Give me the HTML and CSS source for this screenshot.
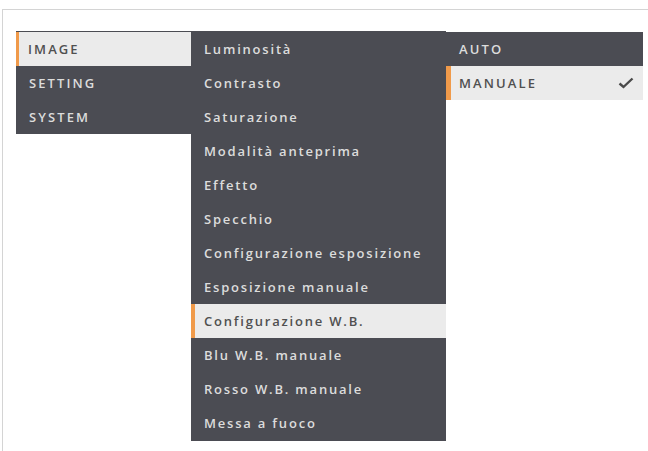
FILE: index.html
```html
<!DOCTYPE html>
<html>
<head>
<meta charset="utf-8">
<link rel="stylesheet" href="styles.css">
</head>
<body>
<div class="frame">
  <div class="menu">
    <ul class="col col1">
      <li class="item sel caps">IMAGE</li>
      <li class="item caps">SETTING</li>
      <li class="item caps">SYSTEM</li>
    </ul>
    <ul class="col col2">
      <li class="item">Luminosità</li>
      <li class="item">Contrasto</li>
      <li class="item">Saturazione</li>
      <li class="item">Modalità anteprima</li>
      <li class="item">Effetto</li>
      <li class="item">Specchio</li>
      <li class="item">Configurazione esposizione</li>
      <li class="item">Esposizione manuale</li>
      <li class="item sel">Configurazione W.B.</li>
      <li class="item">Blu W.B. manuale</li>
      <li class="item">Rosso W.B. manuale</li>
      <li class="item">Messa a fuoco</li>
    </ul>
    <ul class="col col3">
      <li class="item caps">AUTO</li>
      <li class="item sel caps">MANUALE
        <svg class="check" width="16" height="12" viewBox="0 0 16 12"><path d="M1.5 6.5 L5.5 10 L14.5 1.5" fill="none" stroke="#4a4a4a" stroke-width="2.4"/></svg>
      </li>
    </ul>
  </div>
</div>
</body>
</html>
```
FILE: styles.css
```css
html, body {
  margin: 0;
  padding: 0;
  background: #ffffff;
}
.frame {
  margin-top: 9px;
  margin-left: 2px;
  height: 442px;
  border-top: 1px solid #d4d4d4;
  border-left: 1px solid #d4d4d4;
  box-sizing: border-box;
  padding: 21px 0 0 13px;
}
.menu {
  display: flex;
  align-items: flex-start;
}
.col {
  list-style: none;
  margin: 0;
  padding: 1px 0 0 0;
  background: #4b4c53;
}
.col1 { width: 175px; }
.col2 { width: 255px; padding-bottom: 1px; }
.col3 { width: 197px; background: transparent; }
.item {
  height: 34px;
  display: flex;
  align-items: center;
  padding-left: 13px;
  font-family: "Open Sans", "DejaVu Sans", sans-serif;
  font-size: 13px;
  font-weight: 600;
  letter-spacing: 1.8px;
  color: #dcdcdc;
  box-sizing: border-box;
  white-space: nowrap;
}
.col3 .item { background: #4b4c53; }
.caps { letter-spacing: 2.1px; }
.item.sel {
  background: #ebebeb;
  color: #505050;
  border-left: 4px solid #f09a4a;
  padding-left: 9px;
}
.col1 .item.sel {
  border-left-width: 3px;
  padding-left: 9px;
}
.col3 .item.sel {
  background: #ebebeb;
  border-left-width: 5px;
  padding-left: 8px;
}
.check {
  margin-left: auto;
  margin-right: 9px;
}
```
